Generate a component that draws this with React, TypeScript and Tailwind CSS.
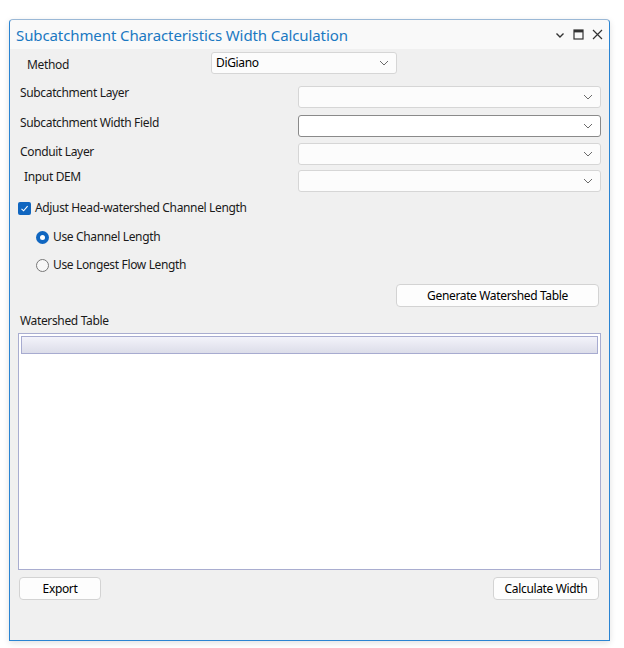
import React from "react";

const font = { fontFamily: '"Noto Sans", "Open Sans", sans-serif' };

function Chevron() {
  return (
    <svg width="10" height="6" viewBox="0 0 10 6" className="shrink-0">
      <path d="M1 1 L5 5 L9 1" fill="none" stroke="#6b6b6b" strokeWidth="1" />
    </svg>
  );
}

function Combo({ className, value, dark }: { className: string; value?: string; dark?: boolean }) {
  return (
    <div
      className={`h-[22px] flex items-center justify-between pl-[4px] pr-[7px] rounded-[3px] border ${
        dark ? "border-[#8a8a8a] bg-white" : "border-[#d6d6d6] bg-[#fcfcfc]"
      } ${className}`}
    >
      <span className="text-[12px] text-black leading-none">{value ?? ""}</span>
      <Chevron />
    </div>
  );
}

function Btn({ className, children }: { className: string; children: React.ReactNode }) {
  return (
    <div
      className={`h-[23px] flex items-center justify-center rounded-[4px] border border-[#d3d3d3] bg-[#fdfdfd] text-[12px] text-black ${className}`}
    >
      {children}
    </div>
  );
}

export default function App() {
  return (
    <div className="w-[624px] h-[648px] bg-white pt-[19px] pl-[9px]" style={font}>
      <div className="w-[601px] h-[622px] border border-[#2a84d2] border-t-[#9ab8d6] rounded-t-[4px] bg-[#f0f0f0] flex flex-col shadow-[0_2px_6px_rgba(0,0,0,0.12)]">
        {/* title bar */}
        <div className="h-[29px] bg-[#f9f9f9] flex items-center pl-[6px] pr-[6px] rounded-t-[4px]">
          <span className="text-[15px] text-[#1a78c2] tracking-[-0.1px] leading-none pt-[2px]">
            Subcatchment Characteristics Width Calculation
          </span>
          <div className="ml-auto flex items-center gap-[8px] text-[#333]">
            <svg width="10" height="10" viewBox="0 0 10 10">
              <path d="M1.5 3.5 L5 7 L8.5 3.5" fill="none" stroke="#333" strokeWidth="1.4" />
            </svg>
            <svg width="11" height="11" viewBox="0 0 11 11">
              <rect x="1" y="1" width="9" height="9" fill="none" stroke="#333" strokeWidth="1.2" />
              <rect x="1" y="1" width="9" height="2.4" fill="#333" />
            </svg>
            <svg width="11" height="11" viewBox="0 0 11 11">
              <path d="M1 1 L10 10 M10 1 L1 10" fill="none" stroke="#333" strokeWidth="1.2" />
            </svg>
          </div>
        </div>

        {/* body */}
        <div className="flex flex-col pl-[8px] pr-[8px] pt-[3px] text-[12px] text-[#1a1a1a] tracking-[-0.35px]">
          <div className="flex items-center h-[22px]">
            <span className="ml-[9px] w-[184px] pt-[3px]">Method</span>
            <Combo className="w-[186px]" value="DiGiano" />
          </div>

          <div className="flex items-start h-[22px] mt-[12px]">
            <span className="ml-[2px] w-[278px] mt-[-2px]">Subcatchment Layer</span>
            <Combo className="flex-1" />
          </div>
          <div className="flex items-start h-[22px] mt-[7px]">
            <span className="ml-[2px] w-[278px] mt-[-1px]">Subcatchment Width Field</span>
            <Combo className="flex-1" dark />
          </div>
          <div className="flex items-start h-[22px] mt-[6px]">
            <span className="ml-[2px] w-[278px] mt-[0px]">Conduit Layer</span>
            <Combo className="flex-1" />
          </div>
          <div className="flex items-start h-[22px] mt-[5px]">
            <span className="ml-[6px] w-[274px] mt-[-2px]">Input DEM</span>
            <Combo className="flex-1" />
          </div>

          <div className="flex items-center mt-[9px] h-[14px]">
            <div className="ml-[0px] w-[13px] h-[13px] rounded-[2px] bg-[#1066c0] flex items-center justify-center">
              <svg width="9" height="9" viewBox="0 0 9 9">
                <path d="M1.5 4.8 L3.6 6.8 L7.6 2.2" fill="none" stroke="white" strokeWidth="1.1" />
              </svg>
            </div>
            <span className="ml-[4px]">Adjust Head-watershed Channel Length</span>
          </div>

          <div className="flex items-center mt-[15px] h-[14px] pl-[18px]">
            <div className="w-[13px] h-[13px] rounded-full bg-[#1066c0] flex items-center justify-center">
              <div className="w-[5px] h-[5px] rounded-full bg-white" />
            </div>
            <span className="ml-[4px]">Use Channel Length</span>
          </div>
          <div className="flex items-center mt-[14px] h-[14px] pl-[18px]">
            <div className="w-[13px] h-[13px] rounded-full border border-[#777] bg-[#f7f7f7]" />
            <span className="ml-[4px]">Use Longest Flow Length</span>
          </div>

          <div className="flex justify-end mt-[12px] pr-[2px]">
            <Btn className="w-[203px]">Generate Watershed Table</Btn>
          </div>

          <div className="ml-[2px] mt-[6px] h-[16px] leading-[16px]">Watershed Table</div>

          <div className="mt-[4px] h-[237px] border border-[#a9add0] bg-white p-[2px]">
            <div className="h-[18px] border border-[#a7abd0] bg-gradient-to-b from-[#f3f3fa] to-[#dcdde9]" />
          </div>

          <div className="flex justify-between mt-[7px] pr-[2px] pl-[1px]">
            <Btn className="w-[82px]">Export</Btn>
            <Btn className="w-[106px]">Calculate Width</Btn>
          </div>
        </div>
      </div>
    </div>
  );
}
